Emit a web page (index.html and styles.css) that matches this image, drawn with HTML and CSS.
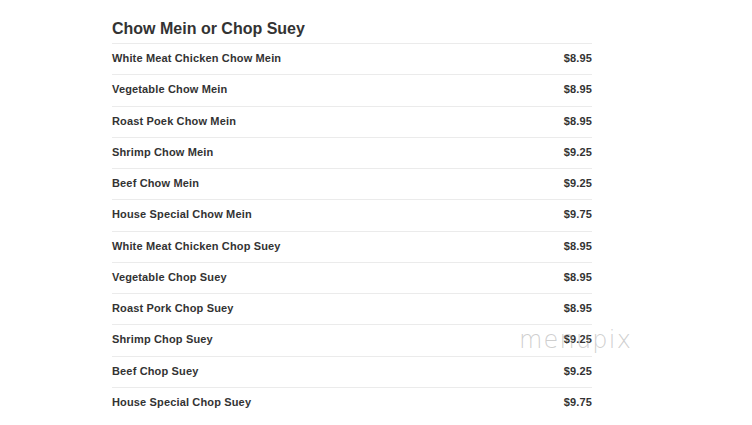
FILE: index.html
```html
<!DOCTYPE html>
<html>
<head>
<meta charset="utf-8">
<link rel="stylesheet" href="styles.css">
</head>
<body>
<div class="menu">
  <h2 class="title">Chow Mein or Chop Suey</h2>
  <div class="row"><span>White Meat Chicken Chow Mein</span><span>$8.95</span></div>
  <div class="row"><span>Vegetable Chow Mein</span><span>$8.95</span></div>
  <div class="row"><span>Roast Poek Chow Mein</span><span>$8.95</span></div>
  <div class="row"><span>Shrimp Chow Mein</span><span>$9.25</span></div>
  <div class="row"><span>Beef Chow Mein</span><span>$9.25</span></div>
  <div class="row"><span>House Special Chow Mein</span><span>$9.75</span></div>
  <div class="row"><span>White Meat Chicken Chop Suey</span><span>$8.95</span></div>
  <div class="row"><span>Vegetable Chop Suey</span><span>$8.95</span></div>
  <div class="row"><span>Roast Pork Chop Suey</span><span>$8.95</span></div>
  <div class="row"><span>Shrimp Chop Suey</span><span>$9.25</span></div>
  <div class="row"><span>Beef Chop Suey</span><span>$9.25</span></div>
  <div class="row"><span>House Special Chop Suey</span><span>$9.75</span></div>
</div>
<div class="watermark">menupix</div>
</body>
</html>
```
FILE: styles.css
```css
html, body {
  margin: 0;
  padding: 0;
  background: #fff;
}
body {
  font-family: "Liberation Sans", Arial, sans-serif;
  color: #333;
  position: relative;
  width: 752px;
  height: 425px;
  overflow: hidden;
}
.menu {
  margin-left: 112px;
  width: 480px;
}
.title {
  margin: 0;
  padding-top: 19px;
  padding-bottom: 5px;
  font-size: 16px;
  line-height: 19px;
  font-weight: bold;
  color: #333;
}
.row {
  box-sizing: border-box;
  height: 31.25px;
  border-top: 1px solid #ebebeb;
  display: flex;
  justify-content: space-between;
  align-items: center;
  font-size: 11px;
  font-weight: bold;
  letter-spacing: 0.15px;
  color: #333;
  padding-bottom: 2px;
}
.watermark {
  position: absolute;
  left: 519px;
  top: 326px;
  font-family: "DejaVu Sans", sans-serif;
  font-size: 24px;
  font-weight: 200;
  letter-spacing: 1.2px;
  color: rgba(160, 160, 160, 0.5);
}
```
